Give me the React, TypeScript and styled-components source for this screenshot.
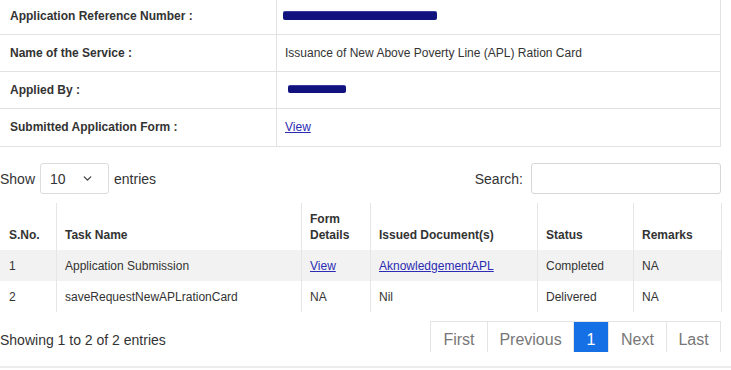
import React from "react";
import styled, { createGlobalStyle } from "styled-components";
import { ChevronDown } from "lucide-react";

const Global = createGlobalStyle`
  html, body { margin: 0; padding: 0; background: #fff; }
  body { font-family: "Liberation Sans", Arial, sans-serif; color: #333; overflow: hidden; }
  * { box-sizing: border-box; }
`;

const Page = styled.div`
  width: 731px;
  height: 370px;
  overflow: hidden;
  background: #fff;
`;

const InfoTable = styled.div`
  display: grid;
  grid-template-columns: 277px 1fr;
  width: 722px;
  margin: -3px 0 0 -1px;
  border: 1px solid #e2e2e2;
`;

const Label = styled.div`
  height: 37px;
  display: flex;
  align-items: center;
  padding: 0 0 1px 10px;
  font-size: 12px;
  font-weight: bold;
  color: #333;
  border-right: 1px solid #e2e2e2;
  border-bottom: 1px solid #e2e2e2;
`;

const Value = styled.div`
  height: 37px;
  display: flex;
  align-items: center;
  padding: 0 0 1px 8px;
  font-size: 12px;
  color: #333;
  border-bottom: 1px solid #e2e2e2;
  &:last-child { border-bottom: none; }
`;

const LastLabel = styled(Label)`
  border-bottom: none;
`;

const Redacted = styled.span<{ $w: number; $h: number; $ml: number }>`
  display: inline-block;
  width: ${(p) => p.$w}px;
  height: ${(p) => p.$h}px;
  margin-left: ${(p) => p.$ml}px;
  background: #12127e;
  border-radius: 2px;
  box-shadow: 0 -1px 0 #3a3aa0;
`;

const Link = styled.a`
  color: #2b2bb3;
  text-decoration: underline;
  cursor: pointer;
`;

const Toolbar = styled.div`
  display: flex;
  justify-content: space-between;
  align-items: center;
  width: 721px;
  margin-top: 16px;
  height: 31px;
  font-size: 14px;
  color: #333;
`;

const LengthGroup = styled.div`
  display: flex;
  align-items: center;
  gap: 5px;
`;

const Select = styled.div`
  width: 69px;
  height: 31px;
  border: 1px solid #dcdcdc;
  border-radius: 3px;
  display: flex;
  align-items: center;
  justify-content: space-between;
  padding: 0 14px 0 9px;
  font-size: 14px;
  color: #333;
`;

const SearchGroup = styled.div`
  display: flex;
  align-items: center;
  gap: 8px;
`;

const SearchInput = styled.div`
  width: 190px;
  height: 31px;
  border: 1px solid #d6d6d6;
  border-radius: 3px;
  margin-top: -1px;
`;

const Grid = styled.div`
  margin-top: 9px;
  width: 722px;
`;

const cols = "57px 245px 69px 167px 96px 88px";

const HeadRow = styled.div`
  display: grid;
  grid-template-columns: ${cols};
  height: 47px;
`;

const HeadCell = styled.div`
  display: flex;
  align-items: flex-end;
  padding: 0 8px 7px 8px;
  font-size: 12px;
  font-weight: bold;
  line-height: 16px;
  color: #333;
  border-right: 1px solid #e6e6e6;
  &:first-child { padding-left: 9px; }
`;

const BodyRow = styled.div<{ $shade?: boolean }>`
  display: grid;
  grid-template-columns: ${cols};
  height: 31px;
  background: ${(p) => (p.$shade ? "#f2f2f2" : "#fff")};
`;

const Cell = styled.div`
  display: flex;
  align-items: center;
  padding: 0 8px;
  font-size: 12px;
  color: #333;
  border-right: 1px solid #e6e6e6;
  white-space: nowrap;
  &:first-child { padding-left: 9px; }
`;

const Footer = styled.div`
  display: flex;
  justify-content: space-between;
  align-items: flex-start;
  width: 721px;
  margin-top: 9px;
`;

const Info = styled.div`
  font-size: 14px;
  line-height: 18px;
  padding-top: 10px;
  color: #333;
`;

const Pager = styled.div`
  display: flex;
  height: 31px;
  border-top: 1px solid #e4e4e4;
  border-left: 1px solid #e4e4e4;
  border-right: 1px solid #e4e4e4;
`;

const PageBtn = styled.div<{ $active?: boolean; $w: number }>`
  width: ${(p) => p.$w}px;
  display: flex;
  justify-content: center;
  padding-top: 7px;
  font-size: 16px;
  line-height: 22px;
  color: ${(p) => (p.$active ? "#fff" : "#777")};
  background: ${(p) => (p.$active ? "#1570e6" : "#fff")};
  border-left: 1px solid #e4e4e4;
  &:first-child { border-left: none; }
`;

const Rule = styled.div`
  margin-top: 14px;
  width: 731px;
  height: 2px;
  background: #ececec;
`;

export default function App() {
  return (
    <Page>
      <Global />
      <InfoTable>
        <Label>Application Reference Number :</Label>
        <Value>
          <Redacted $w={154} $h={8} $ml={-2} />
        </Value>
        <Label>Name of the Service :</Label>
        <Value>Issuance of New Above Poverty Line (APL) Ration Card</Value>
        <Label>Applied By :</Label>
        <Value>
          <Redacted $w={58} $h={7} $ml={3} />
        </Value>
        <LastLabel>Submitted Application Form :</LastLabel>
        <Value>
          <Link>View</Link>
        </Value>
      </InfoTable>

      <Toolbar>
        <LengthGroup>
          <span>Show</span>
          <Select>
            <span>10</span>
            <ChevronDown size={13} strokeWidth={2.5} color="#444" />
          </Select>
          <span>entries</span>
        </LengthGroup>
        <SearchGroup>
          <span>Search:</span>
          <SearchInput />
        </SearchGroup>
      </Toolbar>

      <Grid>
        <HeadRow>
          <HeadCell>S.No.</HeadCell>
          <HeadCell>Task Name</HeadCell>
          <HeadCell>Form Details</HeadCell>
          <HeadCell>Issued Document(s)</HeadCell>
          <HeadCell>Status</HeadCell>
          <HeadCell>Remarks</HeadCell>
        </HeadRow>
        <BodyRow $shade>
          <Cell>1</Cell>
          <Cell>Application Submission</Cell>
          <Cell>
            <Link>View</Link>
          </Cell>
          <Cell>
            <Link>AknowledgementAPL</Link>
          </Cell>
          <Cell>Completed</Cell>
          <Cell>NA</Cell>
        </BodyRow>
        <BodyRow>
          <Cell>2</Cell>
          <Cell>saveRequestNewAPLrationCard</Cell>
          <Cell>NA</Cell>
          <Cell>Nil</Cell>
          <Cell>Delivered</Cell>
          <Cell>NA</Cell>
        </BodyRow>
      </Grid>

      <Footer>
        <Info>Showing 1 to 2 of 2 entries</Info>
        <Pager>
          <PageBtn $w={56}>First</PageBtn>
          <PageBtn $w={86}>Previous</PageBtn>
          <PageBtn $w={35} $active>1</PageBtn>
          <PageBtn $w={58}>Next</PageBtn>
          <PageBtn $w={54}>Last</PageBtn>
        </Pager>
      </Footer>
      <Rule />
    </Page>
  );
}
